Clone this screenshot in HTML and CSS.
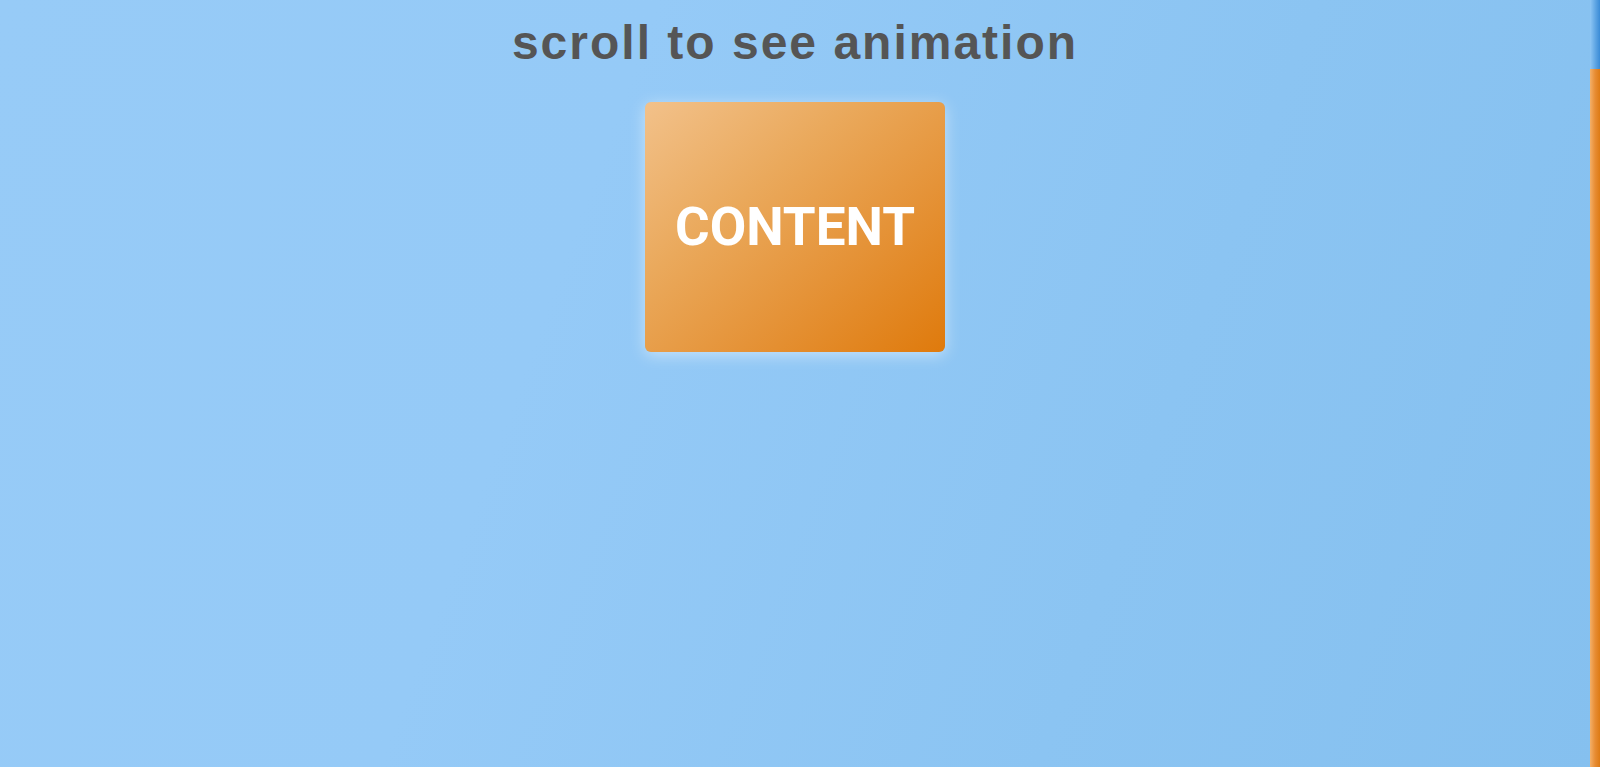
FILE: index.html
```html
<!DOCTYPE html>
<html lang="en">
<head>
<meta charset="utf-8">
<title>scroll to see animation</title>
<link rel="stylesheet" href="styles.css">
</head>
<body>
<div class="app">
  <main class="page">
    <h1 class="title">scroll to see animation</h1>
    <div class="card">
      <span class="card-label">CONTENT</span>
    </div>
  </main>
  <div class="rail" aria-hidden="true">
    <div class="rail-thumb"></div>
  </div>
</div>
</body>
</html>
```
FILE: styles.css
```css
html, body {
  margin: 0;
  height: 100%;
  overflow: hidden;
}
body {
  font-family: "Liberation Sans", Arial, sans-serif;
  background: linear-gradient(110deg, #97cbf7 0%, #95caf7 35%, #8bc4f2 70%, #85c0ef 100%);
}
.app {
  display: grid;
  grid-template-columns: 1fr 10px;
  height: 100vh;
}
.page {
  display: flex;
  flex-direction: column;
  align-items: center;
  min-width: 0;
}
.rail {
  display: flex;
  flex-direction: column;
  background: linear-gradient(to right, #f3b06a, #e88d34 50%, #dd7a14);
}
.rail-thumb {
  height: 69px;
  background: linear-gradient(to right, #8ec6f4, #62a8e5 50%, #3a8bd6);
}
.title {
  margin: 15px 0 32px;
  font-size: 48px;
  font-weight: 700;
  letter-spacing: 2px;
  line-height: 55px;
  color: #555555;
}
.card {
  width: 300px;
  height: 250px;
  border-radius: 6px;
  background: linear-gradient(140deg, #f2c18a 0%, #eaa95c 35%, #e59338 65%, #df7a0c 100%);
  box-shadow: 0 3px 16px rgba(255, 255, 255, 0.5);
  display: flex;
  align-items: center;
  justify-content: center;
}
.card-label {
  font-family: Roboto, "Liberation Sans", sans-serif;
  font-weight: 700;
  font-size: 53px;
  letter-spacing: 0;
  color: #ffffff;
}
```
